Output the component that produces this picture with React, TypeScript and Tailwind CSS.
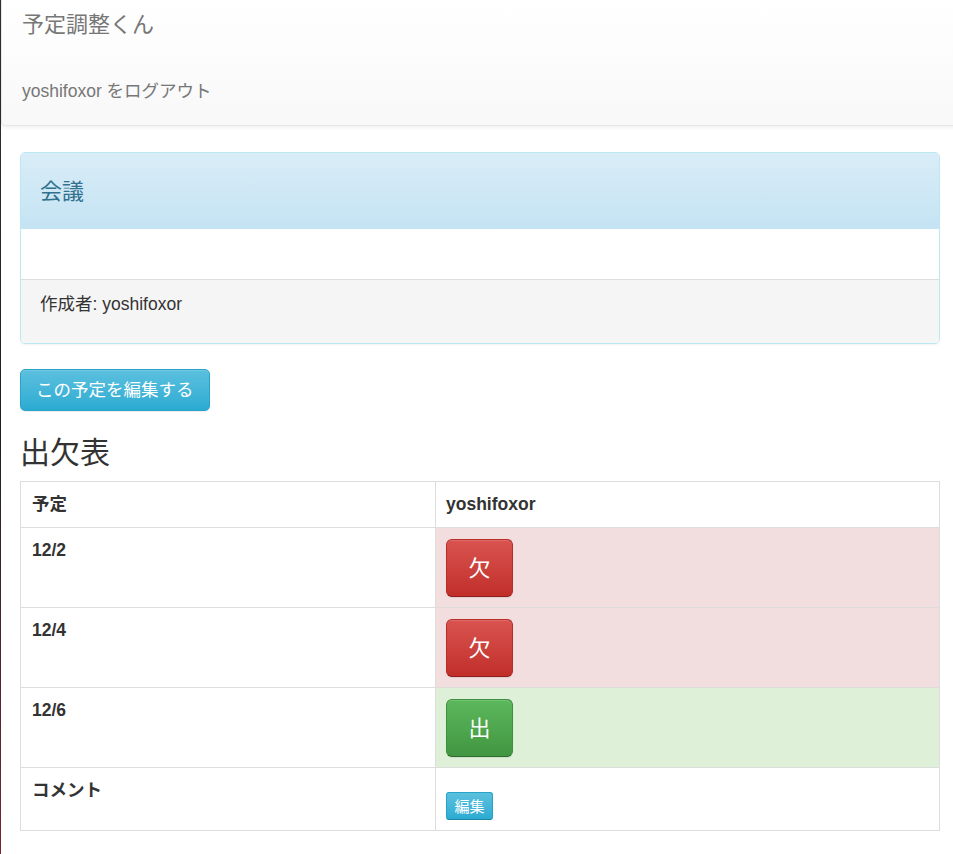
import * as React from 'react';

const rows = [
  { date: '12/2', mark: '欠', ok: false },
  { date: '12/4', mark: '欠', ok: false },
  { date: '12/6', mark: '出', ok: true },
];

export default function App() {
  return (
    <div
      className="flex min-h-[854px] w-[953px] overflow-hidden bg-white text-[#333]"
      style={{ fontFamily: '"Liberation Sans", "Noto Sans CJK JP", sans-serif' }}
    >
      <div className="w-px shrink-0 bg-linear-to-b from-[#2e333b] via-[#1c1f25] to-[#7a2232]" />
      <div className="flex-1">
        {/* navbar */}
        <div className="mr-[-6px] h-[126px] rounded-b-[4px] border border-t-0 border-[#e7e7e7] bg-linear-to-b from-white to-[#f8f8f8] shadow-[0_1px_5px_rgba(0,0,0,0.075)]">
          <div className="flex h-[50px] items-center pl-[20px] text-[22px] leading-[26px] text-[#777]">予定調整くん</div>
          <div className="pl-[20px] pt-[31px] text-[17.5px] leading-[20px] text-[#777]">yoshifoxor をログアウト</div>
        </div>

        <div className="ml-[19px] mr-[13px]">
          {/* panel */}
          <div className="mt-[26px] overflow-hidden rounded-[5px] border border-[#bce8f1] shadow-[0_1px_2px_rgba(0,0,0,0.05)]">
            <div className="flex h-[76px] items-center bg-linear-to-b from-[#d9edf7] to-[#c4e3f3] px-[19px] text-[22px] text-[#31708f]">
              会議
            </div>
            <div className="h-[50px] bg-white" />
            <div className="h-[64px] border-t border-[#ddd] bg-[#f5f5f5] px-[19px] pt-[12px] text-[17.5px] leading-[25px]">
              作成者: yoshifoxor
            </div>
          </div>

          {/* edit button */}
          <button className="mt-[25px] flex h-[42px] items-center rounded-[5px] border border-[#28a4c9] bg-linear-to-b from-[#5bc0de] to-[#2aabd2] px-[15px] text-[17.5px] text-white shadow-[inset_0_1px_0_rgba(255,255,255,0.15),0_1px_1px_rgba(0,0,0,0.075)]">
            この予定を編集する
          </button>

          <h2 className="mt-[25px] mb-[12px] text-[30px] leading-[33px] font-normal">出欠表</h2>

          {/* table */}
          <table className="w-full border-collapse border border-[#ddd] text-[17.5px] leading-[25px]">
            <tbody>
              <tr>
                <th className="w-[415px] border border-[#ddd] px-[11px] py-[10px] text-left font-bold">予定</th>
                <th className="border border-[#ddd] px-[10px] py-[10px] text-left font-bold">yoshifoxor</th>
              </tr>
              {rows.map((r) => (
                <tr key={r.date}>
                  <th className="border border-[#ddd] px-[11px] pt-[10px] pb-[44px] text-left align-top font-bold">{r.date}</th>
                  <td
                    className={`border border-[#ddd] px-[10px] pt-[11px] pb-[10px] align-top ${
                      r.ok ? 'bg-[#dff0d8]' : 'bg-[#f2dede]'
                    }`}
                  >
                    {r.ok ? (
                      <button className="flex h-[58px] w-[67px] items-center justify-center rounded-[6px] border border-[#3e8f3e] border-b-[#2b6e2b] bg-linear-to-b from-[#5cb85c] to-[#419641] text-[22px] text-white shadow-[inset_0_1px_0_rgba(255,255,255,0.15),0_1px_1px_rgba(0,0,0,0.075)]">
                        {r.mark}
                      </button>
                    ) : (
                      <button className="flex h-[58px] w-[67px] items-center justify-center rounded-[6px] border border-[#b92c28] border-b-[#8e1f1c] bg-linear-to-b from-[#d9534f] to-[#c12e2a] text-[22px] text-white shadow-[inset_0_1px_0_rgba(255,255,255,0.15),0_1px_1px_rgba(0,0,0,0.075)]">
                        {r.mark}
                      </button>
                    )}
                  </td>
                </tr>
              ))}
              <tr>
                <th className="border border-[#ddd] px-[11px] pt-[10px] pb-[27px] text-left align-top font-bold">コメント</th>
                <td className="border border-[#ddd] px-[10px] pt-[24px] pb-[10px] align-top">
                  <button className="flex h-[28px] w-[47px] items-center justify-center rounded-[3px] border border-[#28a4c9] border-b-[#1f84a3] bg-linear-to-b from-[#5bc0de] to-[#2aabd2] text-[15px] text-white">
                    編集
                  </button>
                </td>
              </tr>
            </tbody>
          </table>
        </div>
      </div>
    </div>
  );
}
